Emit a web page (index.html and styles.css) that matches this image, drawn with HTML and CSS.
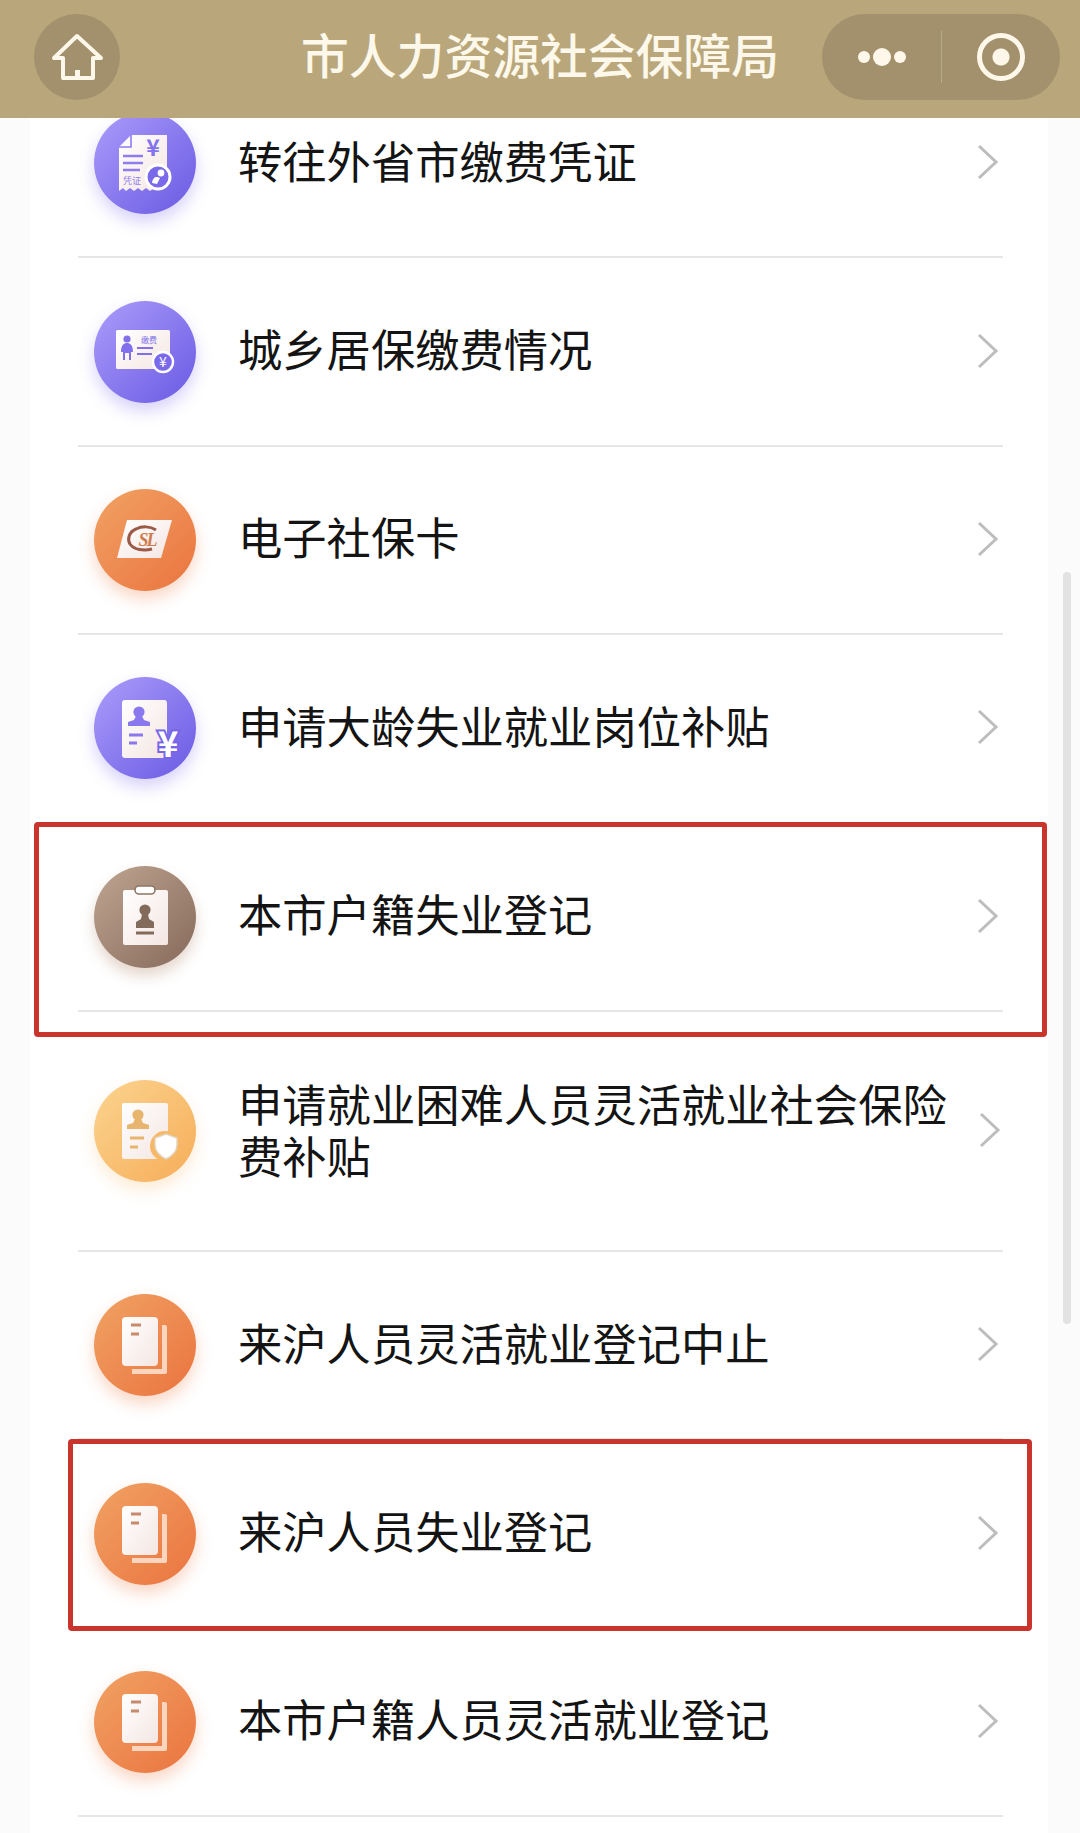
FILE: index.html
```html
<!DOCTYPE html>
<html lang="zh-CN">
<head>
    <meta charset="UTF-8">
    <meta name="viewport" content="width=device-width, initial-scale=1.0">
    <title>市人力资源社会保障局</title>
    <link rel="stylesheet" href="styles.css">
</head>

<body>
    <svg class="defs" width="0" height="0">
        <defs>
            <linearGradient id="paper" x1="0" y1="0" x2="1" y2="1">
                <stop offset="0" stop-color="#ffffff"/>
                <stop offset="1" stop-color="#f4e6e2"/>
            </linearGradient>

            <symbol id="ico-receipt" viewBox="0 0 102 102">
                <path d="M37 23H73V66L60 76L56 79L52 76L48 79L44 76L40 79L36 76L32 79L29 76L25 79V35Z" fill="url(#paper)"/>
                <path d="M25 35H37V23" fill="none" stroke="#8f7cf0" stroke-width="1.6"/>
                <path d="M29 44H49M29 51H49M29 58H46" stroke="#8f7cf0" stroke-width="2.4"/>
                <text x="59" y="44" class="ico-txt mid bold" font-size="23" fill="#8473ee">¥</text>
                <text x="29" y="72" class="ico-txt" font-size="9" fill="#8f7cf0">凭证</text>
                <circle cx="64" cy="65" r="12" fill="#7a69ea" stroke="#fff" stroke-width="3"/>
                <circle cx="67" cy="61" r="3.4" fill="#fff"/>
                <path d="M58 71C59 65 62 64 66 66L63 72Z" fill="#fff"/>
            </symbol>

            <symbol id="ico-card" viewBox="0 0 102 102">
                <rect x="22" y="29" width="54" height="39" rx="1.5" fill="url(#paper)"/>
                <circle cx="33" cy="38" r="3.6" fill="#8070ec"/>
                <path d="M27 51C27 44 30 42 33 42C36 42 39 44 39 51H37V59H35V52H31V59H29V51Z" fill="#8070ec"/>
                <path d="M43 47H59M43 53H58" stroke="#8070ec" stroke-width="2.2"/>
                <text x="47" y="42" class="ico-txt" font-size="8" fill="#8070ec">缴费</text>
                <circle cx="69" cy="61" r="10" fill="#7a69ea" stroke="#fff" stroke-width="2.4"/>
                <text x="69" y="66" class="ico-txt mid" font-size="14" fill="#fff">¥</text>
            </symbol>

            <symbol id="ico-ssc" viewBox="0 0 102 102">
                <path d="M33 31H78L67 69H23Z" fill="url(#paper)"/>
                <path d="M62 41C56 37 48 37 42 40C35 43 33 50 36 55C40 61 50 62 58 60" fill="none" stroke="#9a5a45" stroke-width="3"/>
                <text x="53" y="57" class="ico-txt mid ssc" font-size="18" fill="#cf7d50">SL</text>
            </symbol>

            <symbol id="ico-person-yen" viewBox="0 0 102 102">
                <path d="M31 23H70Q73 23 73 26V81H31Q28 81 28 78V26Q28 23 31 23Z" fill="url(#paper)"/>
                <circle cx="45" cy="35" r="5.6" fill="#8a79ee"/>
                <path d="M42 39H48L50 43L56 45V49H34V45L40 43Z" fill="#8a79ee"/>
                <path d="M35 58H49M35 66H43" stroke="#8a79ee" stroke-width="3"/>
                <text x="74" y="80" class="ico-txt mid bold yen" font-size="35" fill="#fff" stroke="#7665e8" stroke-width="4">¥</text>
            </symbol>

            <symbol id="ico-badge" viewBox="0 0 102 102">
                <rect x="29" y="24" width="45" height="55" rx="2" fill="url(#paper)"/>
                <rect x="41" y="20" width="20" height="8" rx="4" fill="#fff" stroke="#8f7665" stroke-width="1.6"/>
                <circle cx="51" cy="44" r="5.6" fill="#836b5c"/>
                <path d="M48 48H54L55 53L60 56V62H42V56L47 53Z" fill="#836b5c"/>
                <path d="M42 67H60" stroke="#836b5c" stroke-width="3"/>
            </symbol>

            <symbol id="ico-person-shield" viewBox="0 0 102 102">
                <rect x="28" y="23" width="46" height="56" rx="2" fill="url(#paper)"/>
                <circle cx="44" cy="35" r="5.6" fill="#e8b56f"/>
                <path d="M41 39H47L49 43L55 45V49H33V45L39 43Z" fill="#e8b56f"/>
                <path d="M36 58H50M36 67H44" stroke="#e8b56f" stroke-width="3"/>
                <circle cx="71" cy="66" r="15" fill="#f6b865"/>
                <path d="M72 54L83 58V65C83 72 78 76 72 79C66 76 61 72 61 65V58Z" fill="#fff" stroke="#e3d4bf" stroke-width="1.4"/>
            </symbol>

            <symbol id="ico-docs" viewBox="0 0 102 102">
                <path d="M68 31H71Q73 31 73 33V78Q73 80 71 80H38V75H68Z" fill="#fbd5bd"/>
                <rect x="28" y="23" width="36" height="49" rx="4" fill="url(#paper)"/>
                <path d="M37 31H47M37 40H45" stroke="#c88a6c" stroke-width="3"/>
            </symbol>
        </defs>
    </svg>

    <header class="topbar">
        <div class="home-btn">
            <svg viewBox="0 0 56 56" width="56" height="56">
                <path d="M28 7L5 29H14V49H44V29H52Z" fill="none" stroke="#fff8ea" stroke-width="4" stroke-linejoin="round"/>
                <rect x="26" y="41" width="5" height="8" fill="#fff8ea"/>
            </svg>
        </div>
        <h1 class="page-title">市人力资源社会保障局</h1>
        <div class="capsule">
            <div class="capsule-dots">
                <span class="dot"></span><span class="dot big"></span><span class="dot"></span>
            </div>
            <div class="capsule-line"></div>
            <div class="capsule-target"><span></span></div>
        </div>
    </header>

    <main class="card">
        <ul class="menu">
            <li class="row">
                <span class="icon purple"><svg><use href="#ico-receipt"/></svg></span>
                <span class="label">转往外省市缴费凭证</span>
                <svg class="arrow" viewBox="0 0 22 36"><path d="M2 2L19 18L2 34"/></svg>
            </li>
            <li class="row">
                <span class="icon purple"><svg><use href="#ico-card"/></svg></span>
                <span class="label">城乡居保缴费情况</span>
                <svg class="arrow" viewBox="0 0 22 36"><path d="M2 2L19 18L2 34"/></svg>
            </li>
            <li class="row">
                <span class="icon orange"><svg><use href="#ico-ssc"/></svg></span>
                <span class="label">电子社保卡</span>
                <svg class="arrow" viewBox="0 0 22 36"><path d="M2 2L19 18L2 34"/></svg>
            </li>
            <li class="row">
                <span class="icon purple"><svg><use href="#ico-person-yen"/></svg></span>
                <span class="label">申请大龄失业就业岗位补贴</span>
                <svg class="arrow" viewBox="0 0 22 36"><path d="M2 2L19 18L2 34"/></svg>
            </li>
            <li class="row mark-wide">
                <span class="icon brown"><svg><use href="#ico-badge"/></svg></span>
                <span class="label">本市户籍失业登记</span>
                <svg class="arrow" viewBox="0 0 22 36"><path d="M2 2L19 18L2 34"/></svg>
            </li>
            <li class="row tall">
                <span class="icon yellow"><svg><use href="#ico-person-shield"/></svg></span>
                <span class="label">申请就业困难人员灵活就业社会保险费补贴</span>
                <svg class="arrow" viewBox="0 0 22 36"><path d="M2 2L19 18L2 34"/></svg>
            </li>
            <li class="row">
                <span class="icon orange"><svg><use href="#ico-docs"/></svg></span>
                <span class="label">来沪人员灵活就业登记中止</span>
                <svg class="arrow" viewBox="0 0 22 36"><path d="M2 2L19 18L2 34"/></svg>
            </li>
            <li class="row mark-narrow">
                <span class="icon orange"><svg><use href="#ico-docs"/></svg></span>
                <span class="label">来沪人员失业登记</span>
                <svg class="arrow" viewBox="0 0 22 36"><path d="M2 2L19 18L2 34"/></svg>
            </li>
            <li class="row">
                <span class="icon orange"><svg><use href="#ico-docs"/></svg></span>
                <span class="label">本市户籍人员灵活就业登记</span>
                <svg class="arrow" viewBox="0 0 22 36"><path d="M2 2L19 18L2 34"/></svg>
            </li>
        </ul>
    </main>

    <div class="scrollbar"></div>
</body>
</html>
```

FILE: styles.css
```css
html, body {
    margin: 0;
    height: 1833px;
    overflow: hidden;
}

body {
    position: relative;
    background: #fbfbfb;
    font-family: "Noto Sans CJK SC", "Noto Sans", sans-serif;
    color: #141414;
}

.defs {
    display: block;
    height: 0;
}

.ico-txt {
    font-family: "Noto Sans CJK SC", "Noto Sans", sans-serif;
}

.ico-txt.mid {
    text-anchor: middle;
}

.ico-txt.bold {
    font-weight: 700;
}

.ico-txt.yen {
    paint-order: stroke;
}

.ico-txt.ssc {
    font-family: "Liberation Serif", serif;
    font-style: italic;
    font-weight: 700;
    letter-spacing: -2px;
}

/* top bar */
.topbar {
    position: relative;
    z-index: 2;
    height: 118px;
    background: #b9a77b;
    display: flex;
    align-items: center;
    padding: 0 20px 4px 34px;
    box-sizing: border-box;
}

.home-btn {
    width: 86px;
    height: 86px;
    border-radius: 50%;
    background: #a2916c;
    display: flex;
    align-items: center;
    justify-content: center;
}

.page-title {
    margin: 0 0 6px 181px;
    font-size: 47.8px;
    font-weight: 500;
    line-height: 60px;
    color: #fdf8ea;
    white-space: nowrap;
}

.capsule {
    margin-left: auto;
    width: 238px;
    height: 86px;
    border-radius: 43px;
    background: #a2916c;
    display: flex;
    align-items: center;
}

.capsule-dots {
    width: 119px;
    display: flex;
    align-items: center;
    justify-content: center;
    gap: 3px;
}

.dot {
    width: 12px;
    height: 12px;
    border-radius: 50%;
    background: #fff8ea;
}

.dot.big {
    width: 18px;
    height: 18px;
}

.capsule-line {
    width: 1px;
    height: 52px;
    background: #b9aa88;
}

.capsule-target {
    flex: 1;
    display: flex;
    align-items: center;
    justify-content: center;
}

.capsule-target span {
    width: 48px;
    height: 48px;
    box-sizing: border-box;
    border: 5px solid #fff8ea;
    border-radius: 50%;
    background: radial-gradient(circle, #fff8ea 0 8px, transparent 9px);
}

/* list card, scrolled so the first row sits under the bar */
.card {
    margin: -48px 32px 0 30px;
    padding: 0 45px 0 48px;
    background: #fff;
    height: 1800px;
}

.menu {
    margin: 0;
    padding: 0;
    list-style: none;
}

.row {
    position: relative;
    height: 188.4px;
    display: flex;
    align-items: center;
    padding: 0 4px 0 16px;
    border-bottom: 2px solid #e6e6e6;
    box-sizing: border-box;
}

.row.tall {
    height: 240px;
    padding-right: 2px;
}

.icon {
    flex: none;
    width: 102px;
    height: 102px;
    border-radius: 50%;
    margin-right: 42px;
}

.icon svg {
    display: block;
    width: 102px;
    height: 102px;
}

.purple {
    background: linear-gradient(135deg, #ab9cfb, #6a5ae3);
    box-shadow: 0 8px 16px rgba(122, 105, 234, 0.3);
}

.orange {
    background: linear-gradient(135deg, #f1a264, #ea743f);
    box-shadow: 0 8px 16px rgba(236, 122, 66, 0.3);
}

.brown {
    background: linear-gradient(135deg, #bfa592, #86695a);
    box-shadow: 0 8px 14px rgba(170, 120, 90, 0.3);
}

.yellow {
    background: linear-gradient(135deg, #fbd490, #f6ad58);
    box-shadow: 0 8px 16px rgba(246, 180, 90, 0.25);
}

.label {
    flex: 1;
    font-size: 44.3px;
    line-height: 52px;
    padding: 0 20px 7px 0;
}

.row.tall .label {
    padding-bottom: 4px;
}

.arrow {
    flex: none;
    width: 22px;
    height: 36px;
    margin-bottom: 2px;
    fill: none;
    stroke: #bdbdbd;
    stroke-width: 3;
}

/* red hand drawn boxes on top of the rows */
.mark-wide::after,
.mark-narrow::after {
    content: "";
    position: absolute;
    border: 5px solid #c9352d;
    border-radius: 4px;
    pointer-events: none;
}

.mark-wide::after {
    top: -2px;
    left: -44px;
    width: 1003px;
    height: 205px;
}

.mark-narrow::after {
    top: -1px;
    left: -10px;
    width: 954px;
    height: 182px;
}

.scrollbar {
    position: absolute;
    top: 572px;
    left: 1063px;
    width: 8px;
    height: 752px;
    border-radius: 4px;
    background: #e2e2e2;
}
```
